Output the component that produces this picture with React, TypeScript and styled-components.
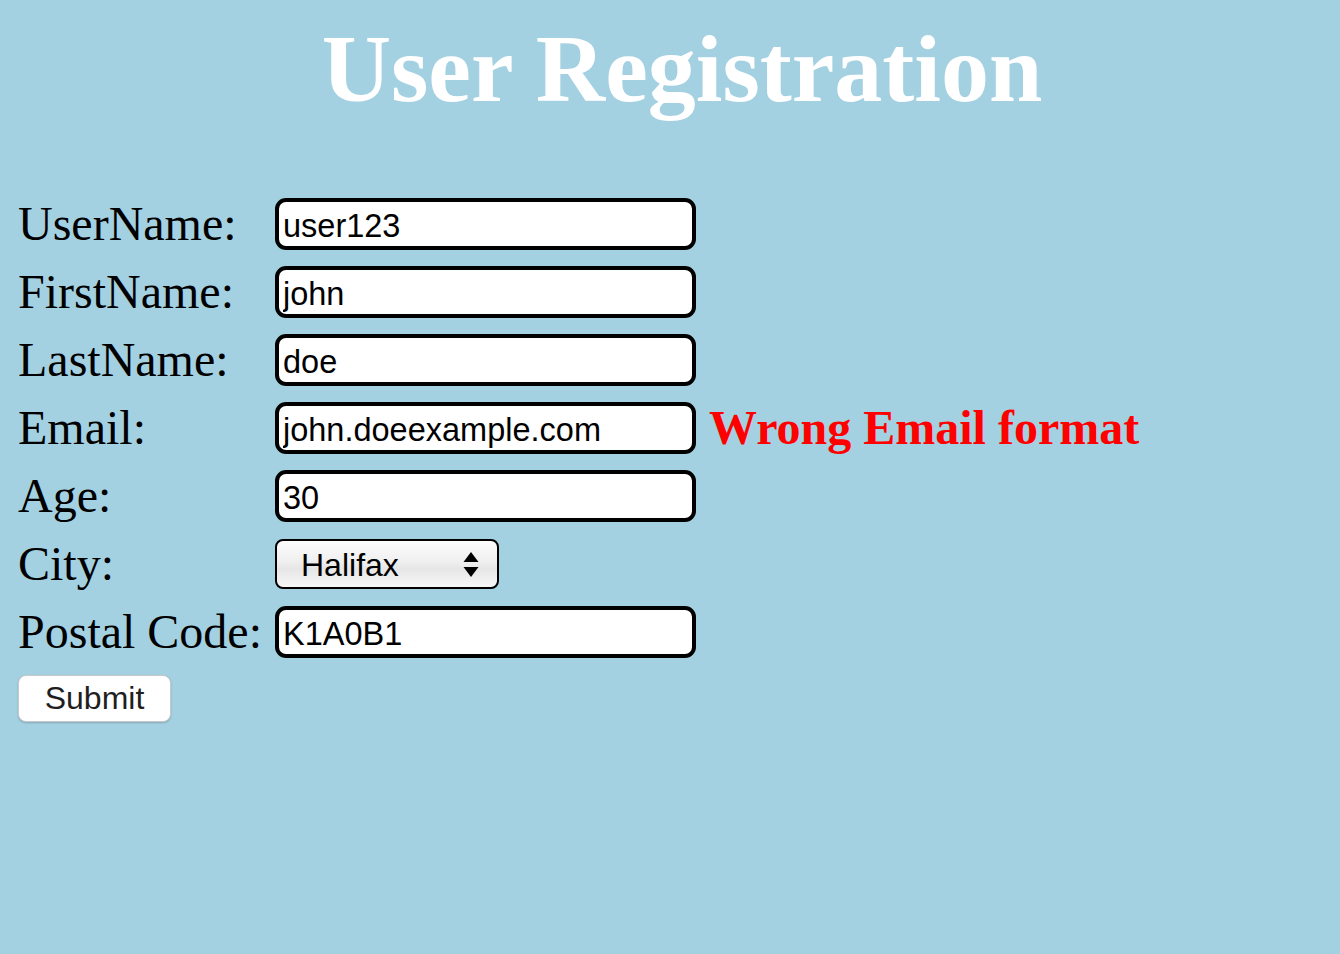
import React, { useState } from "react";
import styled, { createGlobalStyle } from "styled-components";

const GlobalStyle = createGlobalStyle`
  html, body {
    margin: 0;
    padding: 0;
    background: #a3d1e2;
  }
  body {
    font-family: "Liberation Serif", "Times New Roman", serif;
  }
`;

const cities = ["Halifax", "Toronto", "Ottawa", "Montreal", "Vancouver"];

const App: React.FC = () => {
  const [form, setForm] = useState({
    userName: "user123",
    firstName: "john",
    lastName: "doe",
    email: "john.doeexample.com",
    age: "30",
    city: "Halifax",
    postalCode: "K1A0B1",
  });

  const update = (key: keyof typeof form) => (e: React.ChangeEvent<HTMLInputElement | HTMLSelectElement>) =>
    setForm({ ...form, [key]: e.target.value });

  const emailOk = /^[^@\s]+@[^@\s]+\.[^@\s]+$/.test(form.email);

  return (
    <Page>
      <GlobalStyle />
      <Title>User Registration</Title>
      <Form onSubmit={(e) => e.preventDefault()}>
        <Label>UserName:</Label>
        <Field value={form.userName} onChange={update("userName")} />
        <span />

        <Label>FirstName:</Label>
        <Field value={form.firstName} onChange={update("firstName")} />
        <span />

        <Label>LastName:</Label>
        <Field value={form.lastName} onChange={update("lastName")} />
        <span />

        <Label>Email:</Label>
        <Field value={form.email} onChange={update("email")} />
        {emailOk ? <span /> : <ErrorMessage>Wrong Email format</ErrorMessage>}

        <Label>Age:</Label>
        <Field value={form.age} onChange={update("age")} />
        <span />

        <Label>City:</Label>
        <SelectWrap>
          <Select value={form.city} onChange={update("city")}>
            {cities.map((c) => (
              <option key={c}>{c}</option>
            ))}
          </Select>
          <Arrows width="16" height="28" viewBox="0 0 16 28">
            <path d="M8 2 L15.5 12 L0.5 12 Z" fill="#000" />
            <path d="M8 27 L15.5 17 L0.5 17 Z" fill="#000" />
          </Arrows>
        </SelectWrap>
        <span />

        <Label>Postal Code:</Label>
        <Field value={form.postalCode} onChange={update("postalCode")} />
        <span />

        <SubmitButton type="submit">Submit</SubmitButton>
      </Form>
    </Page>
  );
};

export default App;

const Page = styled.div`
  min-height: 954px;
  padding: 16px 0 0 18px;
  box-sizing: border-box;
`;

const Title = styled.h1`
  margin: 0 0 76px;
  padding-left: 6px;
  text-align: center;
  color: #fff;
  font-size: 96px;
  font-weight: bold;
  line-height: 106px;
`;

const Form = styled.form`
  display: grid;
  grid-template-columns: 244px 421px auto;
  column-gap: 13px;
  row-gap: 16px;
  align-items: center;
  justify-content: start;
`;

const Label = styled.label`
  font-size: 48px;
  line-height: 52px;
  color: #000;
  white-space: nowrap;
`;

const Field = styled.input`
  box-sizing: border-box;
  width: 421px;
  height: 52px;
  margin: 0;
  padding: 4px 4px 0 4px;
  border: 4.5px solid #000;
  border-radius: 11px;
  background: #fff;
  color: #000;
  font-family: "Liberation Sans", Arial, sans-serif;
  font-size: 32.5px;
  outline: none;
`;

const ErrorMessage = styled.span`
  color: #ff0000;
  font-size: 48px;
  font-weight: bold;
  line-height: 52px;
  white-space: nowrap;
`;

const SelectWrap = styled.div`
  position: relative;
  width: 224px;
  height: 50px;
`;

const Select = styled.select`
  appearance: none;
  box-sizing: border-box;
  width: 224px;
  height: 50px;
  margin: 0;
  padding: 2px 40px 0 24px;
  border: 2.5px solid #000;
  border-radius: 8px;
  background: linear-gradient(#fdfdfd 0%, #efefef 45%, #e6e6e6 60%, #f7f7f7 100%);
  color: #000;
  font-family: "Liberation Sans", Arial, sans-serif;
  font-size: 32px;
  outline: none;
`;

const Arrows = styled.svg`
  position: absolute;
  right: 20px;
  top: 11px;
  pointer-events: none;
`;

const SubmitButton = styled.button`
  grid-column: 1;
  justify-self: start;
  box-sizing: border-box;
  width: 153px;
  height: 47px;
  margin-top: 1px;
  border: 1px solid #c9c9c9;
  border-radius: 8px;
  background: #fff;
  box-shadow: 0 1px 2px rgba(0, 0, 0, 0.2);
  color: #1f1f1f;
  font-family: "Liberation Sans", Arial, sans-serif;
  font-size: 32px;
  cursor: pointer;
`;
